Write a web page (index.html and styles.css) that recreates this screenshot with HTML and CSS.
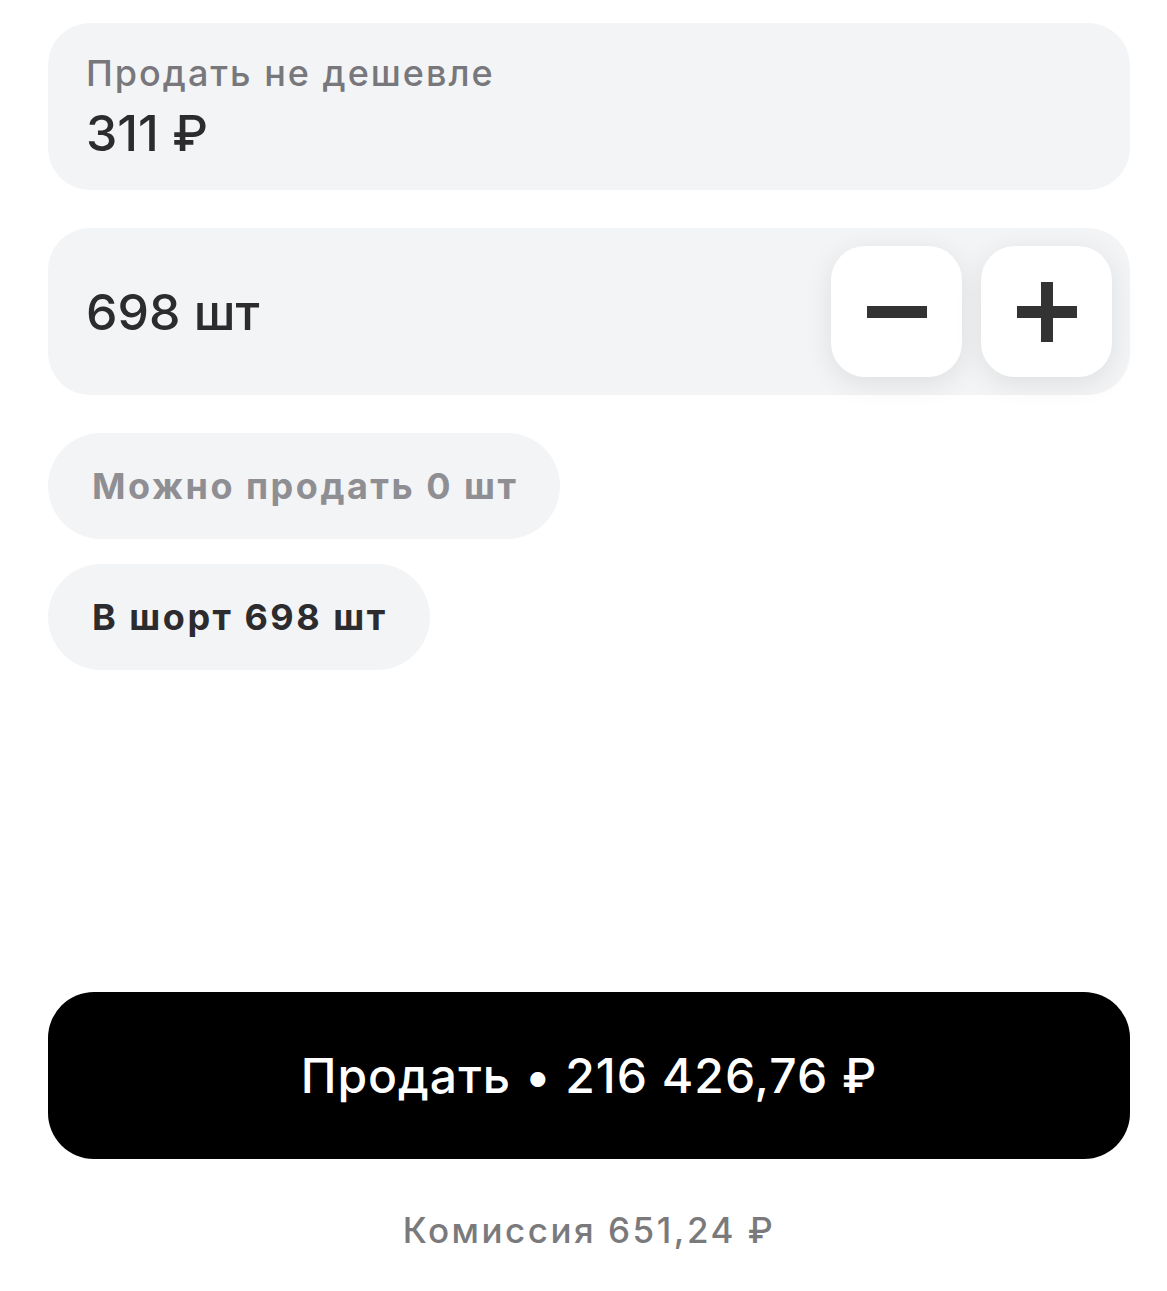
FILE: index.html
```html
<!DOCTYPE html>
<html lang="ru">
<head>
  <meta charset="UTF-8">
  <title>Продать</title>
  <link rel="stylesheet" href="styles.css">
</head>
<body>

  <div class="order">
    <div class="field">
      <div class="field-label">Продать не дешевле</div>
      <div class="field-value">311 ₽</div>
    </div>

    <div class="field qty">
      <div class="field-value">698 шт</div>
      <div class="steppers">
        <button class="step" aria-label="Меньше">
          <svg width="60" height="60" viewBox="0 0 60 60"><rect x="0" y="24" width="60" height="12" fill="#333"/></svg>
        </button>
        <button class="step" aria-label="Больше">
          <svg width="60" height="60" viewBox="0 0 60 60"><rect x="0" y="24" width="60" height="12" fill="#333"/><rect x="24" y="0" width="12" height="60" fill="#333"/></svg>
        </button>
      </div>
    </div>

    <div class="chips">
      <div class="chip muted">Можно продать 0 шт</div>
      <div class="chip">В шорт 698 шт</div>
    </div>

    <button class="submit">Продать • 216 426,76 ₽</button>
    <div class="fee">Комиссия 651,24 ₽</div>
  </div>

</body>
</html>
```

FILE: styles.css
```css
body {
  margin: 0;
  background: #fff;
  font-family: 'Inter', 'Roboto', sans-serif;
  color: #2c2c2e;
}

.order {
  padding: 23px 37px 0 48px;
  display: flex;
  flex-direction: column;
}

.field {
  background-color: #f3f4f6;
  border-radius: 42px;
  height: 167px;
  box-sizing: border-box;
  padding: 2px 38px 0;
  display: flex;
  flex-direction: column;
  justify-content: center;
}

.field-label {
  font-size: 36px;
  font-weight: 500;
  letter-spacing: 2px;
  color: #77777c;
  line-height: 40px;
}

.field-value {
  font-size: 50px;
  font-weight: 500;
  line-height: 60px;
  color: #2c2c2e;
  margin-top: 10px;
}

.qty {
  margin-top: 38px;
  padding-top: 0;
  flex-direction: row;
  align-items: center;
  justify-content: space-between;
  padding-right: 18px;
}

.qty .field-value {
  margin-top: 0;
}

.steppers {
  display: flex;
  gap: 19px;
}

.step {
  width: 131px;
  height: 131px;
  border: none;
  border-radius: 34px;
  background: #fff;
  box-shadow: 0 6px 28px rgba(0, 0, 0, 0.09);
  display: flex;
  align-items: center;
  justify-content: center;
  padding: 0;
}

.chips {
  margin-top: 38px;
  display: flex;
  flex-direction: column;
  align-items: flex-start;
  gap: 25px;
}

.chip {
  background-color: #f3f4f6;
  border-radius: 60px;
  height: 106px;
  padding: 0 42px 0 44px;
  display: flex;
  align-items: center;
  font-size: 36px;
  font-weight: bold;
  letter-spacing: 2.5px;
  color: #2c2c2e;
}

.chip.muted {
  color: #8e8e93;
}

.submit {
  margin-top: 322px;
  height: 167px;
  border: none;
  border-radius: 46px;
  background: #000;
  color: #fff;
  font-family: inherit;
  font-size: 48px;
  font-weight: 500;
  letter-spacing: 1px;
}

.fee {
  margin-top: 50px;
  text-align: center;
  font-size: 35px;
  font-weight: 500;
  letter-spacing: 2.5px;
  color: #7a7a7c;
}
```
